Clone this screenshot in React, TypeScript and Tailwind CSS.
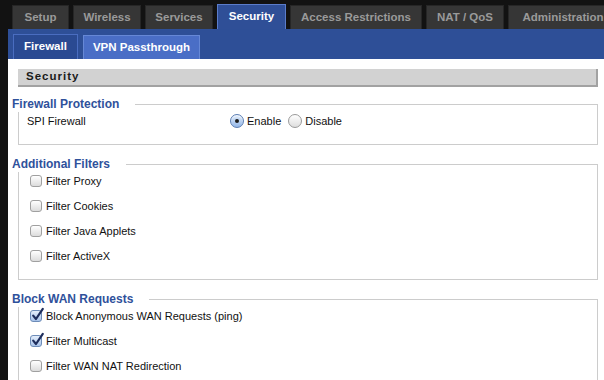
import type { ReactNode } from "react"

// Top level navigation tabs (widths tuned to the router UI)
const mainTabs = [
  { label: "Setup", width: "w-[57px]", active: false },
  { label: "Wireless", width: "w-[68px]", active: false },
  { label: "Services", width: "w-[68px]", active: false },
  { label: "Security", width: "w-[69px]", active: true },
  { label: "Access Restrictions", width: "w-[132px]", active: false },
  { label: "NAT / QoS", width: "w-[78px]", active: false },
  { label: "Administration", width: "w-[110px]", active: false },
]

function Radio({ checked }: { checked?: boolean }) {
  return (
    <span
      className={
        checked
          ? "flex items-center justify-center w-[14px] h-[14px] rounded-full border border-[#5a7db3] bg-linear-to-b from-[#e2edfb] to-[#94b7e8] shadow-[inset_0_1px_1px_rgba(255,255,255,0.8)]"
          : "flex items-center justify-center w-[14px] h-[14px] rounded-full border border-[#9a9a9a] bg-linear-to-b from-white to-[#dedede]"
      }
    >
      {checked && <span className="w-[4px] h-[4px] rounded-full bg-[#1b1b1b]" />}
    </span>
  )
}

function Checkbox({ checked }: { checked?: boolean }) {
  return (
    <span
      className={
        checked
          ? "relative w-[12px] h-[12px] rounded-[3px] border border-[#6d8cb8] bg-linear-to-b from-[#e4eefb] to-[#a8c3ea]"
          : "relative w-[12px] h-[12px] rounded-[3px] border border-[#a0a0a0] bg-linear-to-b from-white to-[#dcdcdc]"
      }
    >
      {checked && (
        <svg
          className="absolute -top-[4px] left-[0px]"
          width="14"
          height="15"
          viewBox="0 0 14 15"
          fill="none"
        >
          <path
            d="M2.2 8.6 L5 12 L11.8 1.8"
            stroke="#1d2d5c"
            strokeWidth="2.2"
            strokeLinecap="round"
            strokeLinejoin="round"
          />
        </svg>
      )}
    </span>
  )
}

function Group({
  title,
  className,
  children,
}: {
  title: string
  className: string
  children: ReactNode
}) {
  return (
    <section className={className}>
      <div className="flex items-end h-[16px]">
        <h3 className="h-[16px] leading-[16px] text-[12px] font-bold text-[#2f519b]">{title}</h3>
        <div className="flex-1 h-[8px] ml-[16px] border-t border-r border-[#cccccc]" />
      </div>
      <div className="ml-[6px] border-l border-r border-b border-[#cccccc]">{children}</div>
    </section>
  )
}

function CheckRow({ label, checked }: { label: string; checked?: boolean }) {
  return (
    <label className="flex items-center h-[16px] gap-[4px]">
      <Checkbox checked={checked} />
      <span>{label}</span>
    </label>
  )
}

export default function App() {
  return (
    <div className="w-[604px] h-[380px] overflow-hidden bg-[#121212] font-['Liberation_Sans',Arial,sans-serif] text-[11px] text-[#111]">
      {/* Main tabs */}
      <nav className="flex items-end h-[29px] pl-[12px] gap-[4px]">
        {mainTabs.map((tab) => (
          <div
            key={tab.label}
            className={
              tab.active
                ? `${tab.width} shrink-0 h-[25px] flex items-center justify-center bg-[#2f4f97] border border-b-0 border-[#5b7cca] text-white text-[11.5px] font-bold`
                : `${tab.width} shrink-0 h-[24px] flex items-center justify-center bg-[#363636] border border-b-0 border-[#262626] text-[#9a9a9a] text-[11.5px] font-bold`
            }
          >
            {tab.label}
          </div>
        ))}
      </nav>

      {/* Sub tabs */}
      <div className="ml-[8px] h-[30px] bg-[#2e4f97] flex items-end pl-[5px] gap-[5px]">
        <div className="w-[65px] h-[25px] flex items-center justify-center bg-[#2a4a92] border border-b-0 border-[#4a6dc0] text-white text-[11.5px] font-bold">
          Firewall
        </div>
        <div className="w-[117px] h-[24px] flex items-center justify-center bg-[#4a6ec6] border border-b-0 border-[#6688d6] text-white text-[11.5px] font-bold">
          VPN Passthrough
        </div>
      </div>

      {/* Content */}
      <main className="ml-[8px] h-[321px] bg-white pt-[10px] pl-[4px] pr-[6px]">
        <div className="ml-[6px] h-[18px] flex items-center pl-[8px] bg-[#d2d2d2] border-b-2 border-r-2 border-[#a2a2a2]">
          <h2 className="text-[11.5px] font-bold tracking-[1px] text-[#1a1a1a]">Security</h2>
        </div>

        <Group title="Firewall Protection" className="mt-[9px]">
          <div className="pt-[1px] pb-[15px] pl-[8px]">
            <div className="flex items-center h-[16px]">
              <span className="w-[203px]">SPI Firewall</span>
              <label className="flex items-center gap-[3px]">
                <Radio checked />
                <span>Enable</span>
              </label>
              <label className="flex items-center gap-[3px] ml-[7px]">
                <Radio />
                <span>Disable</span>
              </label>
            </div>
          </div>
        </Group>

        <Group title="Additional Filters" className="mt-[11px]">
          <div className="pt-[1px] pb-[15px] pl-[11px] flex flex-col gap-[9px]">
            <CheckRow label="Filter Proxy" />
            <CheckRow label="Filter Cookies" />
            <CheckRow label="Filter Java Applets" />
            <CheckRow label="Filter ActiveX" />
          </div>
        </Group>

        <Group title="Block WAN Requests" className="mt-[11px]">
          <div className="pt-[1px] pb-[15px] pl-[11px] flex flex-col gap-[9px]">
            <CheckRow label="Block Anonymous WAN Requests (ping)" checked />
            <CheckRow label="Filter Multicast" checked />
            <CheckRow label="Filter WAN NAT Redirection" />
          </div>
        </Group>
      </main>
    </div>
  )
}
